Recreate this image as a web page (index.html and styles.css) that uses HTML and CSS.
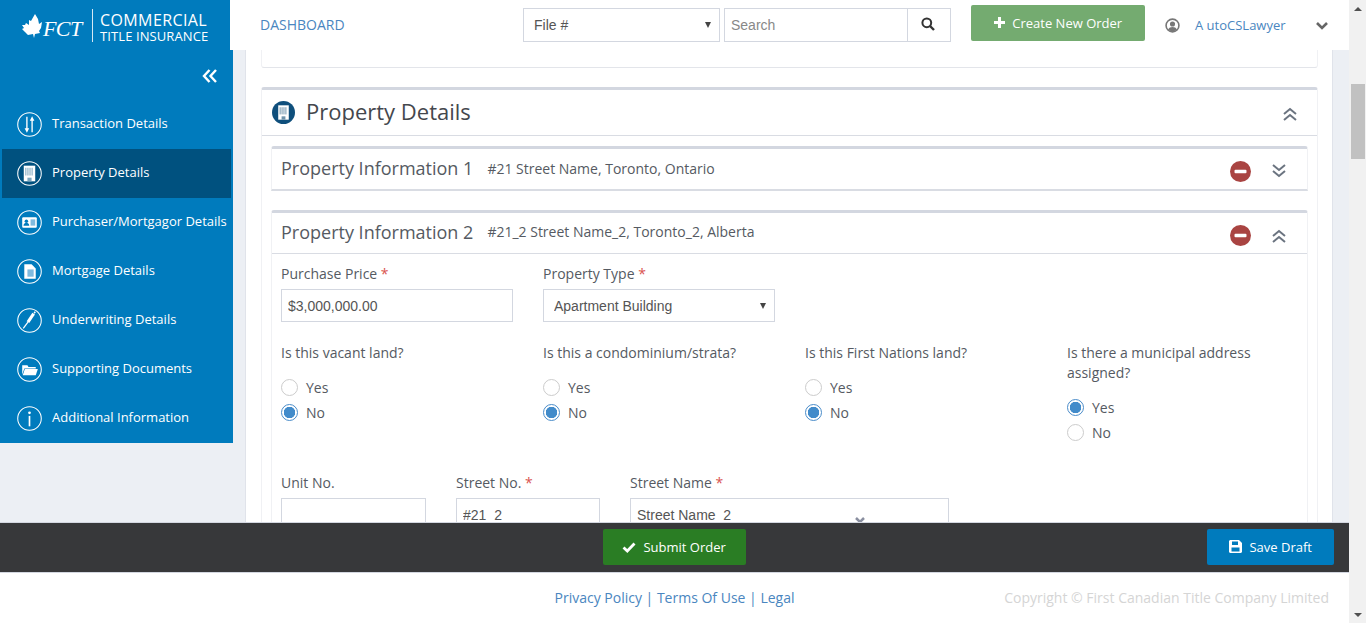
FILE: index.html
```html
<!DOCTYPE html>
<html>
	<head>
		<meta charset="utf-8">
		<title>Property Details</title>
		<link rel="stylesheet" href="styles.css">
	</head>
	<body>
		<div class="page">
			<header class="topbar">
				<div class="brand">
					<svg class="leaf" viewBox="0 0 20 24"><path fill="#fff" d="M13 0l3 5 1 5 3-2-1 6-2 3 1 2-5 1-1 4-1-4-5 1-3-3-3-3 2-1-2-3 3 0 1-2 3 2 0-5 2 1z"/></svg>
					<span class="fct">FCT</span>
					<div class="brand-name">
						<span class="brand-top">COMMERCIAL</span>
						<span class="brand-bottom">TITLE INSURANCE</span>
					</div>
				</div>
				<a class="dash-link">DASHBOARD</a>
				<div class="pick pick-file">
					<select class="pick-input"><option>File #</option></select>
				</div>
				<div class="search">
					<input class="search-input" placeholder="Search">
					<button class="search-btn">
						<svg width="14" height="14" viewBox="0 0 14 14"><circle cx="5.8" cy="5.8" r="4.4" fill="none" stroke="#333" stroke-width="2"/><path d="M9 9l4 4" stroke="#333" stroke-width="2.4"/></svg>
					</button>
				</div>
				<button class="create-btn">
					<svg width="11" height="11" viewBox="0 0 11 11"><path fill="#fff" d="M4 0h3v4h4v3H7v4H4V7H0V4h4z"/></svg>
					Create New Order
				</button>
				<svg class="user-icon" width="15" height="15" viewBox="0 0 14 14"><circle cx="7" cy="7" r="6" fill="none" stroke="#777" stroke-width="1.5"/><circle cx="7" cy="5.6" r="2.4" fill="#777"/><path fill="#777" d="M2.8 11c.8-2 2.4-2.6 4.2-2.6s3.400.6 4.200 2.600L7 13z"/></svg>
				<a class="user-name">A utoCSLawyer</a>
				<svg class="user-arrow" width="14" height="10" viewBox="0 0 14 10"><path d="M2 2l5 5 5-5" fill="none" stroke="#666" stroke-width="2.600"/></svg>
			</header>

			<div class="main">
				<nav class="sidebar">
					<div class="collapse">
						<svg width="16" height="14" viewBox="0 0 16 14"><path d="M7.500 1L2 7l5.500 6M14 1L8.500 7l5.500 6" fill="none" stroke="#fff" stroke-width="2.400"/></svg>
					</div>
					<a class="nav-item">
						<svg class="nav-icon" viewBox="0 0 24 24"><circle cx="12" cy="12" r="11.300" fill="none" stroke="#fff"/><path d="M9.500 4.500v12M14.500 7.500v12" stroke="#fff" stroke-width="1.300"/><path fill="#fff" d="M7.300 15.500h4.400L9.500 20zM12.300 8.500h4.400L14.500 4z"/></svg>
						<span>Transaction Details</span>
					</a>
					<a class="nav-item nav-active">
						<svg class="nav-icon" viewBox="0 0 24 24"><circle cx="12" cy="12" r="11.300" fill="none" stroke="#fff"/><rect x="6.500" y="4.500" width="11" height="15" fill="#fff"/><path d="M8.500 6.500v7.500M10.500 6.500v7.500M12.500 6.500v7.500M14.500 6.500v7.500" stroke="#7fa8bf"/><rect x="10" y="16" width="4" height="3.500" fill="#7fa8bf"/></svg>
						<span>Property Details</span>
					</a>
					<a class="nav-item">
						<svg class="nav-icon" viewBox="0 0 24 24"><circle cx="12" cy="12" r="11.300" fill="none" stroke="#fff"/><rect x="5" y="7" width="14" height="10" rx="1" fill="#fff"/><circle cx="9" cy="10.800" r="1.700" fill="#007bbd"/><path fill="#007bbd" d="M6.200 15c.3-2 1.300-2.500 2.800-2.500s2.500.5 2.800 2.500z"/><rect x="13" y="9" width="4.500" height="6" fill="#7fbade"/></svg>
						<span>Purchaser/Mortgagor Details</span>
					</a>
					<a class="nav-item">
						<svg class="nav-icon" viewBox="0 0 24 24"><circle cx="12" cy="12" r="11.300" fill="none" stroke="#fff"/><path fill="#fff" d="M7 5h7l4 4v10H7z"/><rect x="10" y="10" width="6" height="7" fill="#7fbade"/></svg>
						<span>Mortgage Details</span>
					</a>
					<a class="nav-item">
						<svg class="nav-icon" viewBox="0 0 24 24"><circle cx="12" cy="12" r="11.300" fill="none" stroke="#fff"/><path d="M16 5.500l-5.500 8" stroke="#fff" stroke-width="3"/><path d="M10.500 13.500l-4.500 6" stroke="#fff" stroke-width="1.200"/><path d="M16.500 5l1-1.500" stroke="#fff" stroke-width="1.500"/></svg>
						<span>Underwriting Details</span>
					</a>
					<a class="nav-item">
						<svg class="nav-icon" viewBox="0 0 24 24"><circle cx="12" cy="12" r="11.300" fill="none" stroke="#fff"/><path fill="#fff" d="M5 9.500V8h5l1 1.500h7V11H7l-2 6z"/><path fill="#fff" d="M7.500 11.500H20l-2 6H5.500z"/></svg>
						<span>Supporting Documents</span>
					</a>
					<a class="nav-item">
						<svg class="nav-icon" viewBox="0 0 24 24"><circle cx="12" cy="12" r="11.300" fill="none" stroke="#fff"/><circle cx="12" cy="6.500" r="1.300" fill="#fff"/><rect x="11.200" y="9.500" width="1.600" height="10" fill="#fff"/></svg>
						<span>Additional Information</span>
					</a>
				</nav>

				<div class="content">
					<div class="panel">
						<div class="card-stub"></div>
						<section class="card">
							<div class="card-head">
								<svg class="head-icon" viewBox="0 0 24 24"><circle cx="12" cy="12" r="12" fill="#0f4f7c"/><rect x="6.500" y="4.500" width="11" height="15" fill="#fff"/><path d="M8.500 6.500v7.500M10.500 6.500v7.500M12.500 6.500v7.500M14.500 6.500v7.500" stroke="#6f93ab"/><rect x="10" y="16" width="4" height="3.500" fill="#6f93ab"/></svg>
								<h1 class="card-title">Property Details</h1>
								<svg class="chev chev-big" viewBox="0 0 16 14"><path d="M2 7l6-5 6 5M2 13l6-5 6 5" fill="none" stroke="#6b7480" stroke-width="2"/></svg>
							</div>
							<div class="sub-card sub-closed">
								<div class="sub-head">
									<h2 class="sub-title">Property Information 1</h2>
									<span class="sub-address">#21 Street Name, Toronto, Ontario</span>
									<svg class="remove" viewBox="0 0 21 21"><circle cx="10.500" cy="10.500" r="10.500" fill="#a94442"/><rect x="4.500" y="8.800" width="12" height="3.400" rx="1" fill="#fff"/></svg>
									<svg class="chev" viewBox="0 0 16 14"><path d="M2 1l6 5 6-5M2 7l6 5 6-5" fill="none" stroke="#6b7480" stroke-width="2"/></svg>
								</div>
							</div>
							<div class="sub-card">
								<div class="sub-head sub-head-open">
									<h2 class="sub-title">Property Information 2</h2>
									<span class="sub-address">#21_2 Street Name_2, Toronto_2, Alberta</span>
									<svg class="remove" viewBox="0 0 21 21"><circle cx="10.500" cy="10.500" r="10.500" fill="#a94442"/><rect x="4.500" y="8.800" width="12" height="3.400" rx="1" fill="#fff"/></svg>
									<svg class="chev" viewBox="0 0 16 14"><path d="M2 7l6-5 6 5M2 13l6-5 6 5" fill="none" stroke="#6b7480" stroke-width="2"/></svg>
								</div>
								<div class="form">
									<div class="row-price">
										<div class="field">
											<label class="label">Purchase Price <span class="req">*</span></label>
											<input class="text-input" value="$3,000,000.00">
										</div>
										<div class="field">
											<label class="label">Property Type <span class="req">*</span></label>
											<div class="pick">
												<select class="pick-input"><option>Apartment Building</option></select>
											</div>
										</div>
									</div>
									<div class="row-questions">
										<div class="question">
											<label class="label">Is this vacant land?</label>
											<label class="radio"><input type="radio" name="q1">Yes</label>
											<label class="radio"><input type="radio" name="q1" checked>No</label>
										</div>
										<div class="question">
											<label class="label">Is this a condominium/strata?</label>
											<label class="radio"><input type="radio" name="q2">Yes</label>
											<label class="radio"><input type="radio" name="q2" checked>No</label>
										</div>
										<div class="question">
											<label class="label">Is this First Nations land?</label>
											<label class="radio"><input type="radio" name="q3">Yes</label>
											<label class="radio"><input type="radio" name="q3" checked>No</label>
										</div>
										<div class="question">
											<label class="label">Is there a municipal address assigned?</label>
											<label class="radio"><input type="radio" name="q4" checked>Yes</label>
											<label class="radio"><input type="radio" name="q4">No</label>
										</div>
									</div>
									<div class="row-address">
										<div class="field f-unit">
											<label class="label">Unit No.</label>
											<input class="text-input">
										</div>
										<div class="field f-no">
											<label class="label">Street No. <span class="req">*</span></label>
											<input class="text-input" value="#21_2">
										</div>
										<div class="field f-name">
											<label class="label">Street Name <span class="req">*</span></label>
											<div class="street-box">
												Street Name_2
												<svg class="street-chev" width="10" height="8" viewBox="0 0 10 8"><path d="M1 1l4 4 4-4" fill="none" stroke="#8a8fa0" stroke-width="2.500"/></svg>
											</div>
										</div>
									</div>
								</div>
							</div>
						</section>
					</div>
				</div>
			</div>

			<div class="actionbar">
				<span></span>
				<button class="btn btn-submit">
					<svg width="14" height="11" viewBox="0 0 14 11"><path d="M1.500 5.500l3.800 3.500L12.500 1.500" fill="none" stroke="#fff" stroke-width="2.800"/></svg>
					Submit Order
				</button>
				<button class="btn btn-save">
					<svg width="13" height="13" viewBox="0 0 13 13"><path fill="#fff" d="M0 1l1-1h9l3 3v9l-1 1H1l-1-1z"/><rect x="3" y="1.500" width="6" height="3.500" fill="#007bbd"/><rect x="2.500" y="7.500" width="8" height="4" fill="#007bbd"/></svg>
					Save Draft
				</button>
			</div>

			<footer class="footer">
				<span></span>
				<div class="foot-links"><a>Privacy Policy</a> | <a>Terms Of Use</a> | <a>Legal</a></div>
				<div class="copyright">Copyright © First Canadian Title Company Limited</div>
			</footer>
		</div>

		<div class="scrollbar">
			<div class="arrow arrow-up"></div>
			<div class="track"><div class="thumb"></div></div>
			<div class="arrow arrow-down"></div>
		</div>
	</body>
</html>
```

FILE: styles.css
```css
* {
	box-sizing: border-box;
}

html, body {
	height: 100%;
	margin: 0;
}

body {
	display: flex;
	overflow: hidden;
	font-family: "Open Sans", sans-serif;
	font-size: 14px;
	color: #555a62;
	background: #eceff4;
}

.page {
	flex: 1;
	min-width: 0;
	display: flex;
	flex-direction: column;
	height: 623px;
}

/* top bar */
.topbar {
	flex: 0 0 50px;
	display: flex;
	align-items: center;
	background: #fff;
}

.brand {
	flex: 0 0 230px;
	height: 50px;
	display: flex;
	align-items: center;
	padding-left: 22px;
	background: #007bbd;
	color: #fff;
}

.leaf {
	flex: 0 0 20px;
	width: 20px;
	height: 24px;
	margin-top: 2px;
}

.fct {
	flex: 0 0 50px;
	padding: 7px 0 0 1px;
	font-family: "Liberation Serif", serif;
	font-style: italic;
	font-size: 22px;
	letter-spacing: -0.6px;
}

.brand-name {
	display: flex;
	flex-direction: column;
	height: 33px;
	padding-left: 7px;
	border-left: 1px solid #d5e8f4;
}

.brand-top {
	padding-top: 2px;
	font-size: 16px;
	line-height: 18px;
	letter-spacing: 0.4px;
	white-space: nowrap;
}

.brand-bottom {
	font-size: 13px;
	line-height: 14px;
	letter-spacing: 0.1px;
	white-space: nowrap;
}

.dash-link {
	flex: 0 0 293px;
	padding: 0 0 2px 30px;
	color: #4a86c0;
	font-size: 14px;
}

.pick {
	position: relative;
	height: 33px;
}

.pick::after {
	content: "";
	position: absolute;
	right: 9px;
	top: 14px;
	border: 3.5px solid transparent;
	border-top: 6px solid #444;
	border-bottom: 0;
}

.pick-file {
	flex: 0 0 197px;
	height: 34px;
	margin-right: 4px;
}

.pick-input {
	width: 100%;
	height: 100%;
	padding: 0 10px;
	border: 1px solid #d3d7e0;
	border-radius: 0;
	background: #fff;
	appearance: none;
	font-family: "Liberation Sans", sans-serif;
	font-size: 14px;
	color: #555;
}

.search {
	flex: 0 0 227px;
	min-width: 0;
	height: 34px;
	display: flex;
	border: 1px solid #d3d7e0;
}

.search-input {
	flex: 1;
	width: 0;
	min-width: 0;
	padding: 0 6px;
	border: 0;
	font-family: "Liberation Sans", sans-serif;
	font-size: 14px;
}

.search-input::placeholder {
	color: #888;
}

.search-btn {
	flex: 0 0 43px;
	padding: 0 3px 0 0;
	border: 0;
	border-left: 1px solid #d3d7e0;
	background: #fff;
}

.create-btn {
	flex: 0 0 174px;
	height: 36px;
	margin: -4px 20px 0 20px;
	border: 0;
	border-radius: 2px;
	background: #74ab70;
	color: #fff;
	font-family: "Open Sans", sans-serif;
	font-size: 13px;
}

.create-btn svg {
	margin-right: 4px;
}

.user-icon {
	margin-left: 0;
}

.user-name {
	flex: 0 0 90px;
	margin-left: 15px;
	color: #4a86c0;
	font-size: 13px;
	white-space: nowrap;
}

.user-arrow {
	margin-left: 29px;
	margin-top: 2px;
}

/* layout under the top bar */
.main {
	flex: 1;
	min-height: 0;
	display: flex;
	overflow: hidden;
}

.sidebar {
	flex: 0 0 233px;
	height: 393px;
	background: #007bbd;
}

.collapse {
	height: 50px;
	padding: 18px 15px 0 0;
	text-align: right;
}

.nav-item {
	height: 49px;
	display: flex;
	align-items: center;
	gap: 10px;
	padding-left: 17px;
	color: #fff;
	font-size: 13px;
	white-space: nowrap;
}

.nav-item span {
	margin-bottom: 3px;
}

.nav-active {
	margin: 0 2px;
	padding-left: 15px;
	background: #00517f;
}

.nav-icon {
	flex: 0 0 25px;
	width: 25px;
	height: 25px;
	margin-bottom: 1px;
}

.content {
	flex: 1;
	min-width: 0;
	padding: 0 16px 0 12px;
}

.panel {
	height: 100%;
	padding: 0 14px 0 15px;
	background: #fff;
	border-left: 1px solid #e0e3ea;
	border-right: 1px solid #e0e3ea;
	overflow: hidden;
}

.card-stub {
	height: 18px;
	margin-bottom: 19px;
	border: 1px solid #f0f1f4;
	border-top: 0;
	border-bottom-color: #e3e5ea;
	border-radius: 0 0 3px 3px;
}

.card {
	border: 1px solid #f0f1f4;
	border-top: 3px solid #d3d7e0;
	border-radius: 3px 3px 0 0;
	padding: 0 9px;
}

.card-head {
	height: 46px;
	margin: 0 -9px;
	padding: 0 19px 0 10px;
	display: flex;
	align-items: center;
	border-bottom: 1px solid #d9dce3;
}

.head-icon {
	flex: 0 0 23px;
	height: 23px;
}

.card-title {
	flex: 1;
	margin: 0 0 4px 11px;
	font-size: 22px;
	font-weight: 400;
	color: #44474d;
}

.chev {
	flex: 0 0 16px;
	width: 16px;
	height: 14px;
	margin-left: 22px;
}

.chev-big {
	margin-bottom: -2px;
}

.sub-card {
	border: 1px solid #f0f1f4;
	border-top: 3px solid #d3d7e0;
	border-radius: 3px 3px 0 0;
	margin-top: 10px;
}

.sub-closed {
	margin-bottom: 19px;
	border-bottom: 2px solid #d9dce3;
}

.sub-head {
	height: 40px;
	display: flex;
	align-items: center;
	padding: 0 20px 2px 9px;
}

.sub-head-open {
	height: 41px;
	padding-bottom: 3px;
	border-bottom: 1px solid #d9dce3;
}

.sub-title {
	margin: 0;
	font-size: 18px;
	font-weight: 400;
	color: #555a62;
	white-space: nowrap;
}

.sub-address {
	flex: 1;
	margin-left: 14px;
	font-size: 14px;
	color: #555a62;
}

.remove {
	flex: 0 0 21px;
	width: 21px;
	height: 21px;
	margin-top: 6px;
}

.sub-head-open .remove {
	margin-top: 8px;
}

.sub-head .chev {
	margin-left: 20px;
	margin-top: 6px;
}

.sub-head-open .chev {
	margin-top: 8px;
}

/* form */
.form {
	padding: 10px 9px 0 9px;
}

.label {
	display: block;
	margin-bottom: 5px;
	line-height: 20px;
	font-size: 14px;
	color: #555a62;
}

.req {
	color: #d9534f;
}

.row-price {
	display: flex;
	gap: 30px;
}

.field {
	width: 232px;
}

.text-input {
	display: block;
	width: 100%;
	height: 33px;
	padding: 0 6px;
	border: 1px solid #d3d7e0;
	border-radius: 0;
	font-family: "Liberation Sans", sans-serif;
	font-size: 14px;
	color: #555;
}

.row-questions {
	display: grid;
	grid-template-columns: repeat(4, 262px);
	margin-top: 21px;
}

.question {
	padding-right: 30px;
}

.question .label {
	margin-bottom: 12px;
}

.radio {
	display: flex;
	align-items: center;
	height: 25px;
	gap: 8px;
	color: #555a62;
}

.radio input {
	width: 17px;
	height: 17px;
	margin: 0;
	appearance: none;
	border: 1px solid #ccc;
	border-radius: 50%;
	background: #fff;
}

.radio input:checked {
	border-color: #4a8cc9;
	background: radial-gradient(circle, #428bca 0 5.500px, #fff 6px);
}

.row-address {
	display: flex;
	gap: 30px;
	margin-top: 28px;
}

.f-unit {
	width: 145px;
}

.f-no {
	width: 144px;
}

.f-name {
	width: 319px;
}

.street-box {
	position: relative;
	height: 50px;
	padding: 8px 6px;
	border: 1px solid #d3d7e0;
	font-family: "Liberation Sans", sans-serif;
	font-size: 14px;
	line-height: 17px;
	color: #555;
}

.street-chev {
	position: absolute;
	left: 224px;
	top: 18px;
}

/* bottom bars */
.actionbar {
	flex: 0 0 51px;
	display: grid;
	grid-template-columns: 1fr auto 1fr;
	align-items: center;
	padding: 0 15px 1px 0;
	background: #37383a;
	border-bottom: 1px solid #d3d7e0;
	border-top: 1px solid #d3d7e0;
}

.btn {
	height: 36px;
	border: 0;
	border-radius: 2px;
	color: #fff;
	font-family: "Open Sans", sans-serif;
	font-size: 13px;
}

.btn svg {
	margin-right: 4px;
	vertical-align: -1px;
}

.btn-submit {
	width: 143px;
	background: #2a7d24;
	position: relative;
	left: 7px;
}

.btn-save {
	width: 127px;
	justify-self: end;
	background: #007bbd;
}

.footer {
	flex: 0 0 50px;
	display: grid;
	grid-template-columns: 1fr auto 1fr;
	align-items: center;
	padding: 0 20px 2px;
	background: #fff;
	color: #4a86c0;
}

.foot-links {
	white-space: nowrap;
}

.copyright {
	text-align: right;
	color: #d5d5d5;
	white-space: nowrap;
}

/* page scrollbar */
.scrollbar {
	flex: 0 0 17px;
	display: flex;
	flex-direction: column;
	background: #f1f1f1;
}

.arrow {
	flex: 0 0 17px;
	display: flex;
	justify-content: center;
	align-items: center;
}

.arrow::before {
	content: "";
	border: 4px solid transparent;
}

.arrow-up::before {
	border-bottom: 4px solid #505050;
	border-top: 0;
}

.arrow-down::before {
	border-top: 4px solid #505050;
	border-bottom: 0;
}

.track {
	flex: 1;
	padding: 67px 1px 0 2px;
}

.thumb {
	height: 75px;
	background: #c1c1c1;
}
```
